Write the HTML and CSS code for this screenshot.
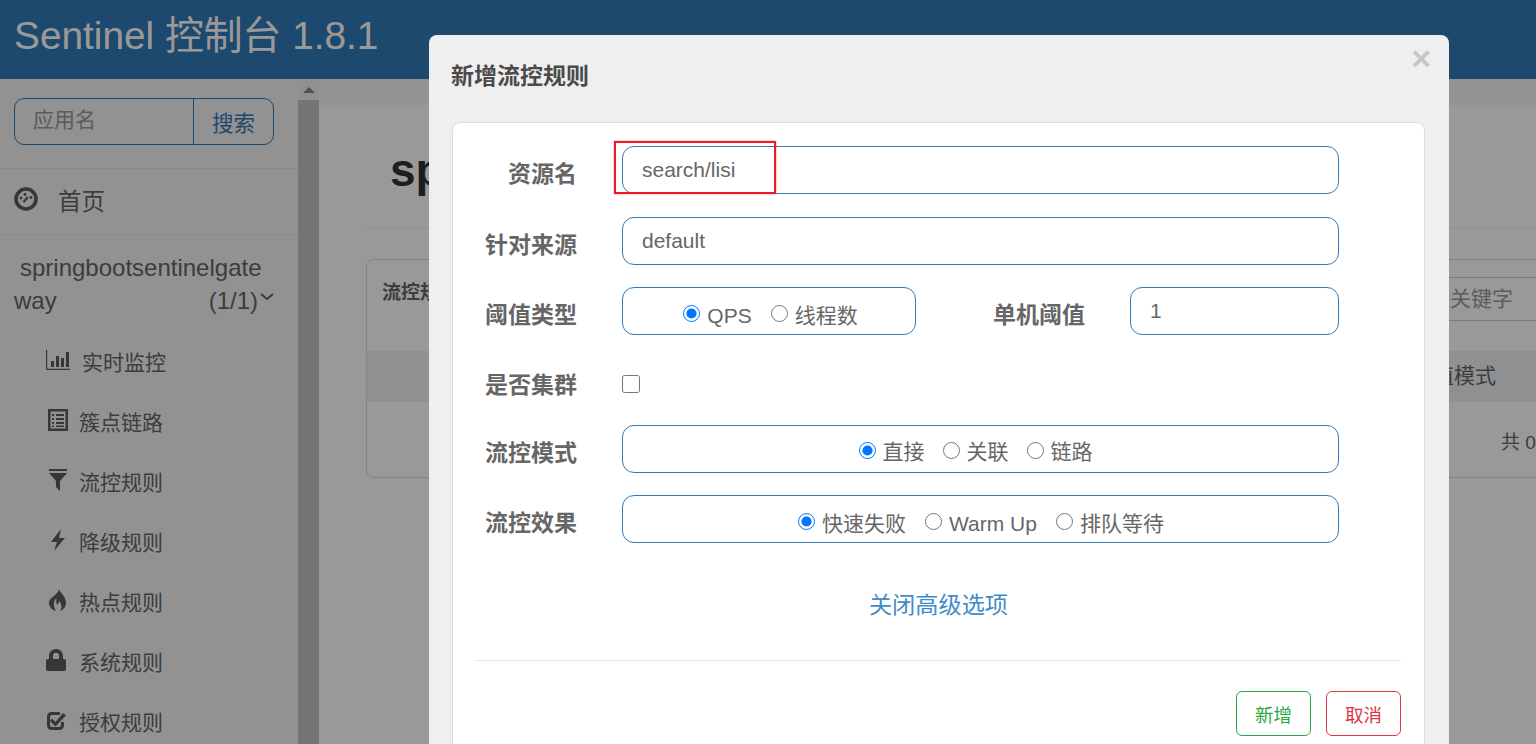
FILE: index.html
```html
<!DOCTYPE html>
<html lang="zh-CN">
<head>
<meta charset="utf-8">
<title>Sentinel 控制台</title>
<link rel="stylesheet" href="styles.css">
</head>
<body>
<header class="navbar"><h1 class="brand">Sentinel 控制台 1.8.1</h1></header>
<div class="layout">
  <aside class="sidebar">
    <div class="search-wrap">
      <div class="search-group">
        <input class="search-input" placeholder="应用名">
        <button class="search-btn">搜索</button>
      </div>
    </div>
    <div class="home-row">
      <svg class="home-icon" viewBox="0 0 24 24"><circle cx="12" cy="12" r="10" fill="none" stroke="#5c5c5c" stroke-width="3.6"/><circle cx="7" cy="11" r="1.400" fill="#5c5c5c"/><circle cx="11" cy="7.500" r="1.400" fill="#5c5c5c"/><circle cx="17" cy="10.500" r="1.400" fill="#5c5c5c"/><path d="M9.500 15L14 10" stroke="#5c5c5c" stroke-width="2.200"/></svg>
      <span>首页</span>
    </div>
    <div class="app-name">
      <div class="app-line1">springbootsentinelgate</div>
      <div class="app-line2"><span>way</span><span class="app-count">(1/1)<svg class="chev" viewBox="0 0 14 8"><path d="M1 1l6 5 6-5" fill="none" stroke="#5c5c5c" stroke-width="1.800"/></svg></span></div>
    </div>
    <nav class="menu">
      <a class="item item-wide"><svg class="ico ico-wide" viewBox="0 0 24 20"><path d="M0 0h1.200v18.800H24V20H0z" fill="#5c5c5c"/><path d="M5 11h3v6H5zM10 6h3v11h-3zM15 8h3v9h-3zM20 2h3v15h-3z" fill="#5c5c5c"/></svg><span>实时监控</span></a>
      <a class="item item-list"><svg class="ico" viewBox="0 0 20 22"><path fill-rule="evenodd" d="M0 0h20v22H0zM2.500 2.500v17h15v-17z" fill="#5c5c5c"/><path d="M4 5h2v2H4zM8 5h8v2H8zM4 9h2v2H4zM8 9h8v2H8zM4 13h2v2H4zM8 13h8v2H8zM4 16.500h2v1.500H4zM8 16.500h8v1.500H8z" fill="#5c5c5c"/></svg><span>簇点链路</span></a>
      <a class="item item-list"><svg class="ico" viewBox="0 0 20 22"><path d="M1 0h18v2H1zM1 4h18l-7 8v10l-4-4v-6z" fill="#5c5c5c"/></svg><span>流控规则</span></a>
      <a class="item item-list"><svg class="ico" viewBox="0 0 20 22"><path d="M13 0L3 13h6l-3 9 11-13h-6z" fill="#5c5c5c"/></svg><span>降级规则</span></a>
      <a class="item item-list"><svg class="ico" viewBox="0 0 20 22"><path d="M11 0c1 4 7 7 7 14 0 4-3 7-6 8 2-3 2-7-1-10 0 2-1 3-2 4-1-3-1-5-.5-7C6 11 4.500 16 8 22c-4-1-7-4-7-8 0-4 3-5 6-8 2-2 4-4 4-6z" fill="#5c5c5c"/></svg><span>热点规则</span></a>
      <a class="item item-lock"><svg class="ico" viewBox="0 0 20 22"><path fill-rule="evenodd" d="M3 10V7c0-4 3-7 7-7s7 3 7 7v3h1c1.200 0 2 .8 2 2v8c0 1.200-.8 2-2 2H2c-1.200 0-2-.8-2-2v-8c0-1.200.8-2 2-2zm4 0h6V7c0-2-1.200-3.200-3-3.200S7 5 7 7z" fill="#5c5c5c"/></svg><span>系统规则</span></a>
      <a class="item item-lock"><svg class="ico" viewBox="0 0 20 22"><path d="M16.500 13v3c0 2-1.200 3.500-3.500 3.500H6c-2.200 0-3.500-1.500-3.500-3.500V8C2.500 6 3.800 4.500 6 4.500h8" fill="none" stroke="#5c5c5c" stroke-width="3"/><path d="M6 9.500l3.500 3.500L17 4l3 2.500L9.500 17.500 4 12z" fill="#5c5c5c"/></svg><span>授权规则</span></a>
    </nav>
  </aside>
  <div class="scrollbar"><div class="scroll-up"><i class="scroll-arrow"></i></div><div class="scroll-thumb"></div></div>
  <main class="content">
    <div class="content-strip"></div>
    <div class="content-body">
      <h2 class="page-title">springbootsentinelgateway</h2>
      <div class="panel">
        <div class="panel-head"><b>流控规则</b><input class="key-input" placeholder="输入关键字"></div>
        <div class="table-head"><span>阈值模式</span></div>
        <div class="table-foot">共 0 条记录</div>
      </div>
    </div>
  </main>
</div>
<div class="backdrop"></div>
<section class="modal">
  <div class="modal-head"><h3 class="modal-title">新增流控规则</h3><span class="close">×</span></div>
  <div class="card">
    <form class="form">
      <div class="row"><label class="lab">资源名</label><input class="field grow" value="search/lisi"></div>
      <div class="row row-second"><label class="lab">针对来源</label><input class="field grow" value="default"></div>
      <div class="row">
        <label class="lab">阈值类型</label>
        <div class="radios radios-threshold">
          <label class="opt"><input type="radio" name="t" checked>QPS</label>
          <label class="opt"><input type="radio" name="t">线程数</label>
        </div>
        <label class="lab lab-inline">单机阈值</label>
        <input class="field field-small" value="1">
      </div>
      <div class="row row-check"><label class="lab">是否集群</label><input class="check" type="checkbox"></div>
      <div class="row">
        <label class="lab">流控模式</label>
        <div class="radios grow radios-mode">
          <label class="opt"><input type="radio" name="m" checked>直接</label>
          <label class="opt"><input type="radio" name="m">关联</label>
          <label class="opt"><input type="radio" name="m">链路</label>
        </div>
      </div>
      <div class="row">
        <label class="lab">流控效果</label>
        <div class="radios grow">
          <label class="opt"><input type="radio" name="e" checked>快速失败</label>
          <label class="opt"><input type="radio" name="e">Warm Up</label>
          <label class="opt"><input type="radio" name="e">排队等待</label>
        </div>
      </div>
    </form>
    <div class="adv"><a class="adv-link">关闭高级选项</a></div>
    <div class="actions">
      <button class="btn btn-ok">新增</button>
      <button class="btn btn-cancel">取消</button>
    </div>
  </div>
</section>
<div class="annotation"></div>
</body>
</html>
```

FILE: styles.css
```css
* { box-sizing: border-box; }
html, body { margin: 0; height: 744px; overflow: hidden; }
body { font-family: "Liberation Sans", "Noto Sans CJK SC", sans-serif; color: #666; background: #fff; position: relative; }
input, button { font-family: inherit; }

.navbar { height: 79px; background: #337ab7; padding-left: 14px; }
.brand { margin: 0; font-size: 38.800px; font-weight: 400; line-height: 72px; color: #fff; }

.layout { display: flex; height: 665px; overflow: hidden; }
.sidebar { width: 298px; flex: none; background: #f3f3f3; }
.search-wrap { height: 90px; padding: 19px 24px 0 14px; border-bottom: 1px solid #e7e7e7; }
.search-group { display: flex; width: 260px; height: 47px; border: 1px solid #337ab7; border-radius: 10px; overflow: hidden; }
.search-input { flex: 1; min-width: 0; border: 0; background: transparent; padding: 0 18px 3px; font-size: 21px; outline: 0; }
.search-input::placeholder { color: #999; }
.search-btn { width: 80px; flex: none; border: 0; border-left: 1px solid #337ab7; background: transparent; color: #337ab7; font-size: 21.500px; padding: 0; }

.home-row { height: 66px; display: flex; align-items: center; gap: 20px; padding: 0 0 4px 14px; border-bottom: 1px solid #e7e7e7; font-size: 23.500px; }
.home-icon { width: 24px; height: 24px; flex: none; margin-top: -2px; }
.app-name { height: 98px; padding-top: 16px; font-size: 24px; line-height: 33px; }
.app-line1 { padding-left: 20px; }
.app-line2 { display: flex; justify-content: space-between; width: 274px; padding-left: 14px; }
.app-count { display: flex; align-items: flex-start; }
.chev { width: 14px; height: 8px; margin: 9px 0 0 2px; }

.menu { display: flex; flex-direction: column; margin-top: -2px; }
.item { height: 60px; display: flex; align-items: center; gap: 12px; padding-left: 47px; font-size: 21px; }
.item-wide { padding-left: 46px; gap: 12px; }
.item-list { padding-left: 48px; gap: 11px; }
.item-lock { padding-left: 46px; gap: 13px; }
.ico { width: 20px; height: 22px; flex: none; margin-top: -2px; }
.ico-wide { width: 24px; height: 20px; }

.scrollbar { width: 21px; flex: none; background: #f1f1f1; }
.scroll-up { height: 21px; display: flex; justify-content: center; align-items: center; }
.scroll-arrow { width: 0; height: 0; border-left: 6px solid transparent; border-right: 6px solid transparent; border-bottom: 6px solid #888; }
.scroll-thumb { height: 644px; background: #c1c1c1; }

.content { flex: 1; min-width: 0; }
.content-strip { height: 26px; background: #f5f5f5; }
.content-body { padding-left: 47px; }
.page-title { margin: 0 0 30px; height: 124px; padding: 39px 0 0 24px; font-size: 46px; line-height: 53px; color: #333; border-bottom: 1px solid #eee; white-space: nowrap; overflow: hidden; }
.panel { width: 1200px; height: 219px; border: 1px solid #ddd; border-radius: 8px; overflow: hidden; white-space: nowrap; }
.panel-head { height: 91px; display: flex; justify-content: space-between; padding: 17px 0 0 15px; font-size: 19px; }
.key-input { width: 170px; height: 44px; border: 1px solid #ccc; background: #fff; padding: 0 12px; font-size: 21px; }
.key-input::placeholder { color: #999; }
.table-head { height: 51px; background: #eef0f3; font-size: 21px; line-height: 50px; text-align: right; padding-right: 69px; }
.table-foot { padding: 28px 0 0 1134px; font-size: 19px; line-height: 26px; }

.backdrop { position: absolute; inset: 0; background: rgba(0,0,0,.4); }

.modal { position: absolute; left: 429px; top: 35px; width: 1020px; height: 760px; background: #efefef; border-radius: 8px; padding: 0 24px 0 23px; }
.modal-head { height: 87px; display: flex; justify-content: space-between; align-items: flex-start; margin-left: -1px; }
.modal-title { margin: 0; padding-top: 24px; font-size: 23px; line-height: 34px; color: #4a4a4a; }
.close { margin: 5px -6px 0 0; font-size: 34px; line-height: 36px; font-weight: 700; color: #c6c6c6; }
.card { height: 640px; background: #fff; border: 1px solid #ddd; border-radius: 8px; padding: 23px 23px 0; }
.form { display: flex; flex-direction: column; gap: 22px; margin-left: -24px; }
.row { display: flex; align-items: flex-start; height: 48px; }
.row-second { margin-top: 1px; }
.row-check { height: 46px; align-items: center; }
.lab { width: 125px; flex: none; margin-right: 45px; text-align: right; font-size: 23px; font-weight: 700; line-height: 34px; padding-top: 11px; color: #666; }
.row-check .lab { padding-top: 0; margin-top: 10px; }
.lab-inline { width: 92px; margin: 0 45px 0 77px; }
.field { height: 48px; border: 1px solid #337ab7; border-radius: 12px; padding: 0 19px; font-size: 21px; color: #666; background: #fff; outline: 0; }
.grow { width: 717px; flex: none; }
.field-small { width: 209px; flex: none; }
.radios { height: 48px; border: 1px solid #337ab7; border-radius: 12px; display: flex; justify-content: center; gap: 18px; padding-top: 12px; font-size: 21px; line-height: 32px; }
.radios-threshold { width: 294px; flex: none; padding-left: 2px; }
.radios-mode { padding-right: 11px; padding-top: 10px; gap: 17px; }
.opt { display: flex; align-items: flex-start; gap: 7px; white-space: nowrap; }
.opt input { width: 17px; height: 17px; margin: 5px 0 0 1px; flex: none; }
.radios-mode .opt input { margin-top: 6px; }
.check { width: 18px; height: 18px; margin: 8px 0 0; flex: none; }

.adv { height: 117px; padding-top: 45px; margin: 0 -23px; text-align: center; font-size: 23.200px; line-height: 34px; }
.adv-link { color: #428bca; }
.actions { border-top: 1px solid #e5e5e5; padding-top: 30px; display: flex; justify-content: flex-end; gap: 15px; }
.btn { width: 75px; height: 45px; background: #fff; border-radius: 6px; font-size: 18.500px; padding: 0; }
.btn-ok { border: 1px solid #28a745; color: #28a745; }
.btn-cancel { border: 1px solid #dc3545; color: #dc3545; }

.annotation { position: absolute; left: 614px; top: 141px; width: 162px; height: 53px; border: 2px solid #ed1c24; box-shadow: 0 0 1px #ed1c24; }
```
